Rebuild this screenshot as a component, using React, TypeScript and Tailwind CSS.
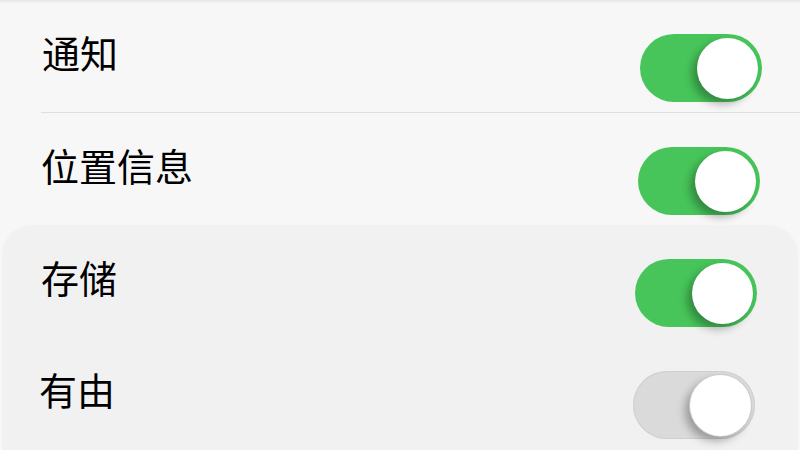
type Row = { label: string; on: boolean; pad: string; right: string };

const topRows: Row[] = [
  { label: '通知', on: true, pad: 'pl-[42px]', right: 'pr-[38px]' },
  { label: '位置信息', on: true, pad: 'pl-[41px]', right: 'pr-[40px]' },
];

const bottomRows: Row[] = [
  { label: '存储', on: true, pad: 'pl-[39px]', right: 'pr-[41px]' },
  { label: '有由', on: false, pad: 'pl-[37px]', right: 'pr-[43px]' },
];

const Toggle: React.FC<{ on: boolean }> = ({ on }) => (
  <div
    className={`mt-6 w-[122px] h-[68px] rounded-full flex items-center justify-end pr-[4px] ${
      on ? 'bg-[#47c55a]' : 'bg-[#dadada] shadow-[inset_0_0_0_1px_#d0d0d0]'
    }`}
  >
    <div
      className={`w-[61px] h-[61px] rounded-full bg-white shadow-[-5px_5px_8px_rgba(0,0,0,0.3)] ${
        on ? '' : 'ring-1 ring-[#c9c9c9]'
      }`}
    />
  </div>
);

const SettingRow: React.FC<{ row: Row }> = ({ row }) => (
  <div className={`h-[112px] flex items-center justify-between ${row.pad} ${row.right}`}>
    <span className="mb-2 text-[38px] leading-none text-black">{row.label}</span>
    <Toggle on={row.on} />
  </div>
);

export default function App() {
  return (
    <div
      className="w-[800px] h-[450px] overflow-hidden bg-[#f7f7f7] flex flex-col"
      style={{ fontFamily: '"Noto Sans CJK SC", "Noto Sans", sans-serif' }}
    >
      {/* faint edge of the group above */}
      <div className="h-[4px] bg-gradient-to-b from-[#e6e6e6] to-[#f7f7f7]" />

      {/* first group */}
      <div className="flex flex-col -mt-[4px]">
        <SettingRow row={topRows[0]} />
        <div className="ml-[41px] h-px bg-[#dfdfdf]" />
        <SettingRow row={topRows[1]} />
      </div>

      {/* second group */}
      <div className="mx-[2px] flex-1 rounded-t-[30px] bg-[#f1f1f1] flex flex-col">
        <SettingRow row={bottomRows[0]} />
        <SettingRow row={bottomRows[1]} />
      </div>
    </div>
  );
}
